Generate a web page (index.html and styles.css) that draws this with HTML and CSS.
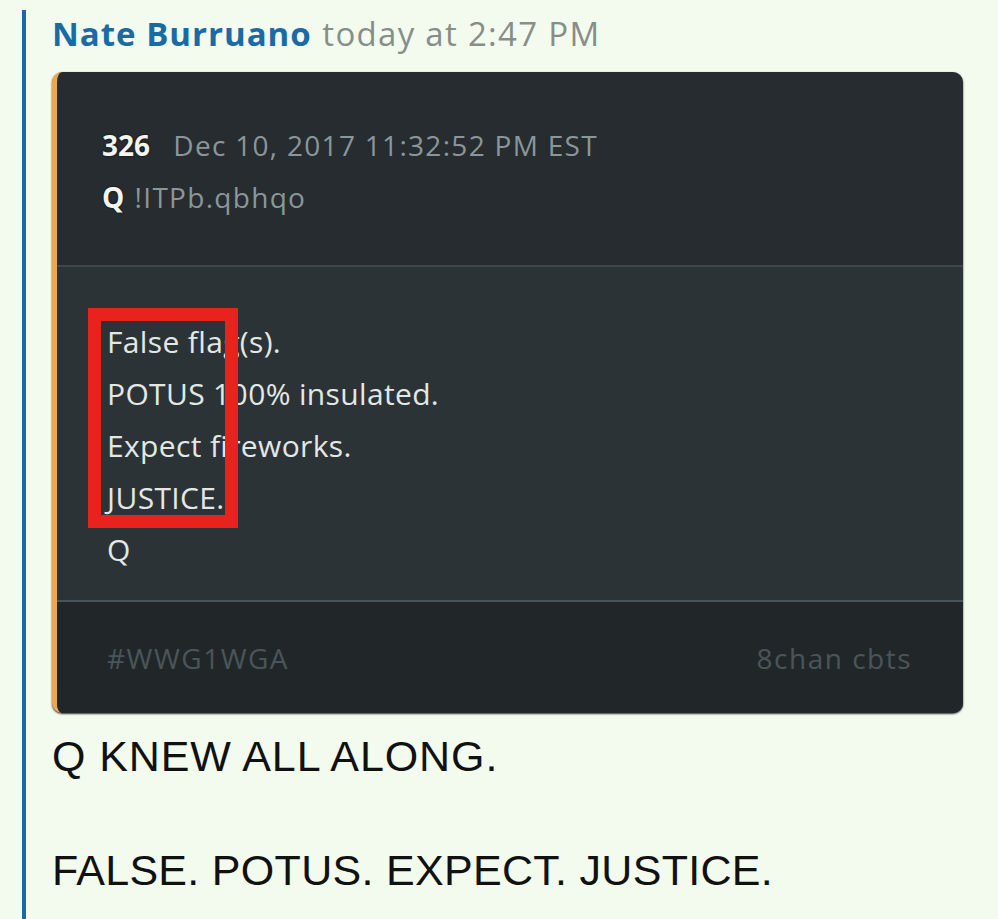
FILE: index.html
```html
<!DOCTYPE html>
<html lang="en">
<head>
  <meta charset="UTF-8" />
  <meta name="viewport" content="width=device-width, initial-scale=1.0"/>
  <title>Nate Burruano</title>
  <link rel="stylesheet" href="styles.css">
</head>
<body>

  <div class="message">
    <div class="meta">
      <span class="author">Nate Burruano</span>
      <span class="time">today at 2:47 PM</span>
    </div>

    <div class="embed">
      <div class="embed-head">
        <div><b>326</b> <span class="dim">Dec 10, 2017 11:32:52 PM EST</span></div>
        <div><b class="q">Q</b> <span class="dim">!ITPb.qbhqo</span></div>
      </div>
      <div class="embed-body">
        <div>False flag(s).</div>
        <div>POTUS 100% insulated.</div>
        <div>Expect fireworks.</div>
        <div>JUSTICE.</div>
        <div>Q</div>
        <div class="highlight"></div>
      </div>
      <div class="embed-foot">
        <span>#WWG1WGA</span>
        <span>8chan cbts</span>
      </div>
    </div>

    <p class="text">Q KNEW ALL ALONG.</p>
    <p class="text">FALSE. POTUS. EXPECT. JUSTICE.</p>
  </div>

</body>
</html>
```

FILE: styles.css
```css
* {
  margin: 0; padding: 0; box-sizing: border-box;
}

body {
  background: #f2fbed;
  font-family: 'Open Sans', sans-serif;
  overflow: hidden;
}

.message {
  margin: 10px 0 0 22px;
  border-left: 4px solid #1b69a8;
  padding: 2px 35px 0 26px;
  min-height: 909px;
}

.meta {
  font-size: 33px;
  line-height: 44px;
  height: 60px;
  letter-spacing: 1px;
}

.author {
  color: #1a6aa6;
  font-weight: 700;
}

.time {
  color: #878d89;
  margin-left: 1px;
  letter-spacing: 1.3px;
}

.embed {
  background: #262c30;
  border-left: 5px solid #e9a953;
  border-radius: 10px;
  box-shadow: 0 1px 2px rgba(0,0,0,0.8);
  overflow: hidden;
  color: #e3e8e5;
}

.embed-head {
  padding: 47px 45px 42px;
  font-size: 28px;
  line-height: 52px;
}

.embed-head b {
  color: #f3f5f2;
  margin-right: 16px;
  text-shadow: 0 0 2px #000;
}

.embed-head b.q {
  margin-right: 3px;
}

.dim {
  color: #8b969a;
  letter-spacing: 1.3px;
}

.embed-body {
  position: relative;
  background: #2b3337;
  border-top: 2px solid #3c484b;
  border-bottom: 2px solid #47545a;
  padding: 49px 50px 24px;
  font-size: 30px;
  line-height: 52px;
  letter-spacing: 0.35px;
}

.highlight {
  position: absolute;
  left: 31px;
  top: 41px;
  width: 150px;
  height: 220px;
  border: 13px solid #e8221c;
}

.embed-foot {
  background: #212729;
  display: flex;
  justify-content: space-between;
  padding: 30px 51px 29px 50px;
  font-size: 28px;
  line-height: 52px;
  letter-spacing: 1.5px;
  color: #4b5559;
}

.text {
  font-family: 'Liberation Sans', Arial, sans-serif;
  font-size: 43px;
  line-height: 57px;
  letter-spacing: 0.3px;
  color: #111;
}

.text:first-of-type {
  margin-top: 15px;
  margin-bottom: 57px;
  letter-spacing: 0.9px;
}
```
